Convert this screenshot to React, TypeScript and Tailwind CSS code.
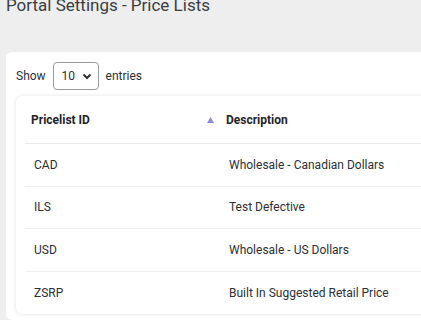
import React from 'react';

const rows = [
  { id: 'CAD', description: 'Wholesale - Canadian Dollars' },
  { id: 'ILS', description: 'Test Defective' },
  { id: 'USD', description: 'Wholesale - US Dollars' },
  { id: 'ZSRP', description: 'Built In Suggested Retail Price' },
];

export default function App() {
  return (
    <div className="h-[320px] w-[421px] overflow-hidden bg-[#eeeeee] font-['Roboto',sans-serif] text-[#2b2f36]">
      {/* Page title (scrolled partly out of view) */}
      <h1 className="-mt-[5px] pl-[6px] text-[17px] leading-[20px] font-normal text-[#3a3d44]">
        Portal Settings - Price Lists
      </h1>

      {/* Outer card */}
      <div className="ml-[6px] mt-[37px] w-[480px] rounded-[6px] bg-white pl-[10px] pt-[10px] pb-[6px]">
        <div className="flex items-center gap-[7px] text-[12px]">
          <span>Show</span>
          <div className="flex h-[28px] w-[46px] items-center justify-between rounded-[4px] border border-[#9a9a9a] pl-[8px] pr-[6px]">
            <span>10</span>
            <svg width="10" height="10" viewBox="0 0 10 10" fill="none">
              <path d="M1.5 3.5 L5 7 L8.5 3.5" stroke="#333" strokeWidth="2" />
            </svg>
          </div>
          <span>entries</span>
        </div>

        {/* Table card */}
        <div className="mt-[6px] rounded-[6px] bg-white px-[9px] shadow-[0_0_4px_rgba(0,0,0,0.12)]">
          <div className="flex h-[48px] items-center border-b border-[#e9ecef] text-[12px] font-bold text-[#1f2329]">
            <div className="flex w-[195px] items-center justify-between pl-[6px] pr-[6px]">
              <span>Pricelist ID</span>
              <svg width="7" height="6" viewBox="0 0 7 6">
                <path d="M3.5 0 L7 6 L0 6 Z" fill="#8b8be0" />
              </svg>
            </div>
            <div className="pl-[6px]">Description</div>
          </div>
          {rows.map((r, i) => (
            <div
              key={r.id}
              className={`flex h-[42.5px] items-center text-[12px] ${i < rows.length - 1 ? 'border-b border-[#eef0f3]' : ''}`}
            >
              <div className="w-[195px] pl-[9px]">{r.id}</div>
              <div className="pl-[9px]">{r.description}</div>
            </div>
          ))}
        </div>
      </div>
    </div>
  );
}
